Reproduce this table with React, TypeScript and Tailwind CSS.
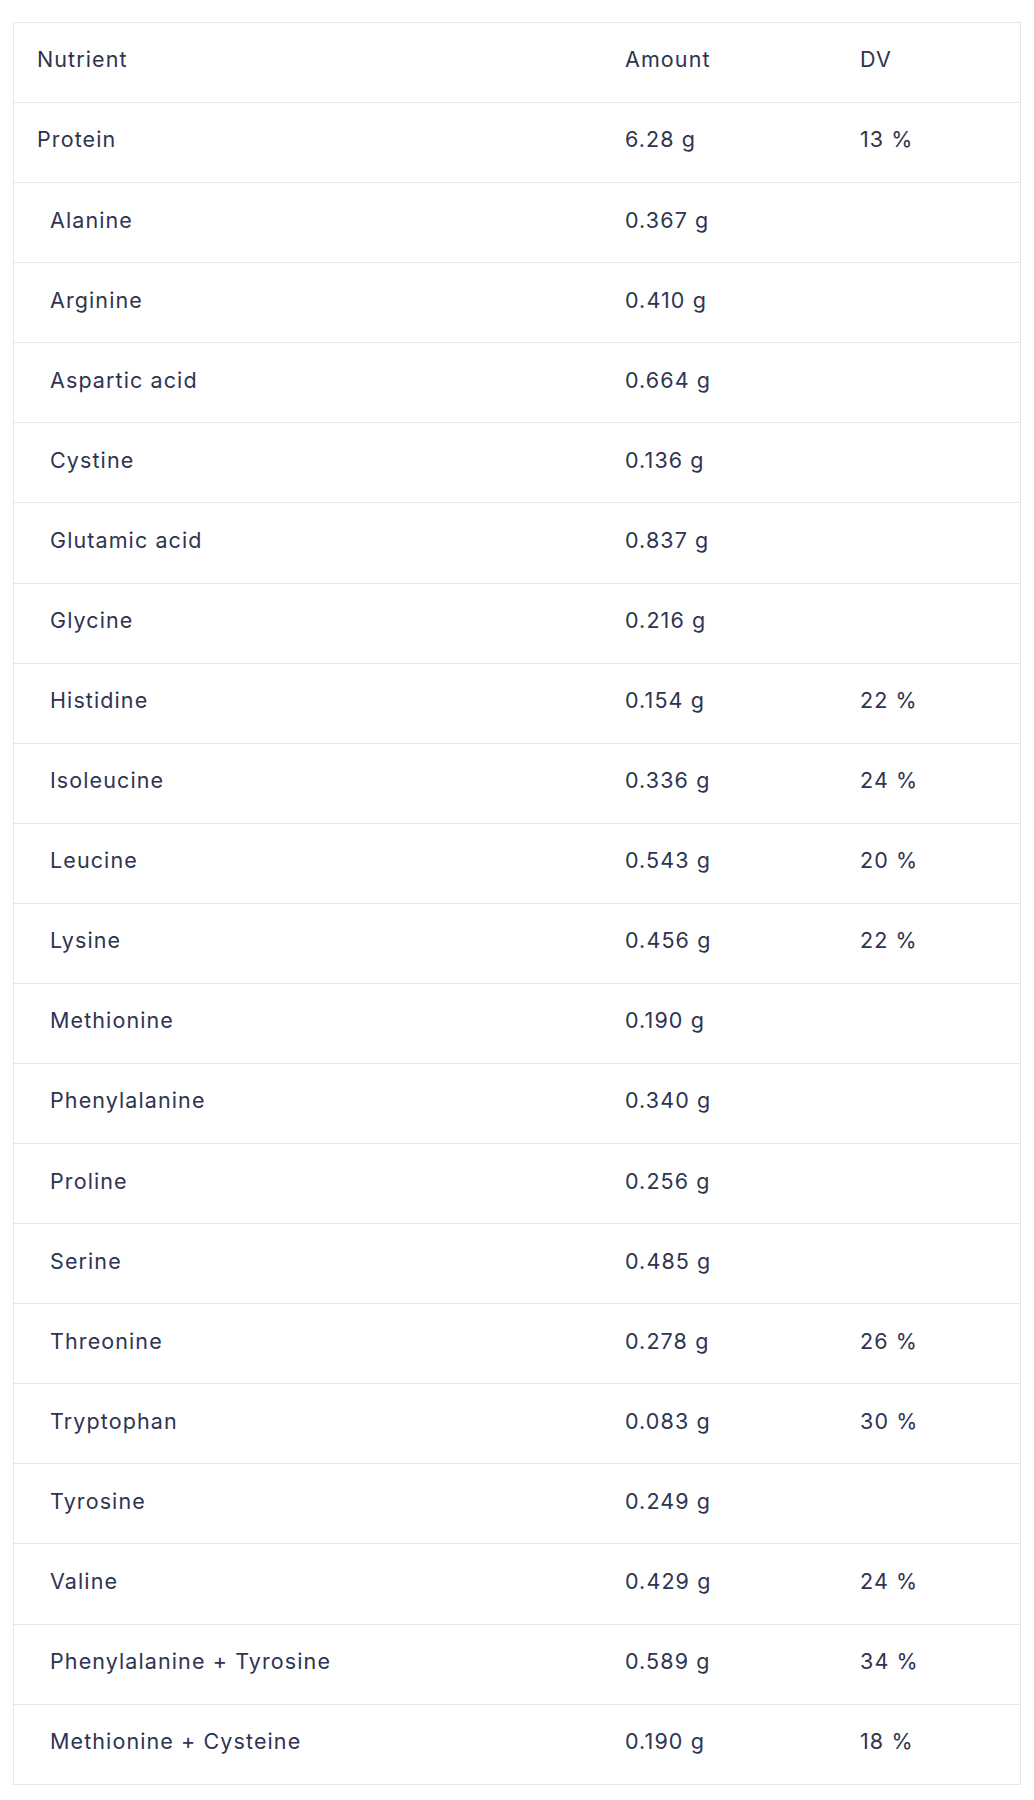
import React from "react";

interface Row {
  name: string;
  amount: string;
  dv?: string;
  sub?: boolean;
}

const rows: Row[] = [
  { name: "Protein", amount: "6.28 g", dv: "13 %" },
  { name: "Alanine", amount: "0.367 g", sub: true },
  { name: "Arginine", amount: "0.410 g", sub: true },
  { name: "Aspartic acid", amount: "0.664 g", sub: true },
  { name: "Cystine", amount: "0.136 g", sub: true },
  { name: "Glutamic acid", amount: "0.837 g", sub: true },
  { name: "Glycine", amount: "0.216 g", sub: true },
  { name: "Histidine", amount: "0.154 g", dv: "22 %", sub: true },
  { name: "Isoleucine", amount: "0.336 g", dv: "24 %", sub: true },
  { name: "Leucine", amount: "0.543 g", dv: "20 %", sub: true },
  { name: "Lysine", amount: "0.456 g", dv: "22 %", sub: true },
  { name: "Methionine", amount: "0.190 g", sub: true },
  { name: "Phenylalanine", amount: "0.340 g", sub: true },
  { name: "Proline", amount: "0.256 g", sub: true },
  { name: "Serine", amount: "0.485 g", sub: true },
  { name: "Threonine", amount: "0.278 g", dv: "26 %", sub: true },
  { name: "Tryptophan", amount: "0.083 g", dv: "30 %", sub: true },
  { name: "Tyrosine", amount: "0.249 g", sub: true },
  { name: "Valine", amount: "0.429 g", dv: "24 %", sub: true },
  { name: "Phenylalanine + Tyrosine", amount: "0.589 g", dv: "34 %", sub: true },
  { name: "Methionine + Cysteine", amount: "0.190 g", dv: "18 %", sub: true },
];

const cols =
  "grid grid-cols-[588px_235px_1fr] h-[80.08px] items-center pb-[6px] border-t border-[#e6e6e6]";

export default function App() {
  return (
    <div className="min-h-screen bg-white px-[13px] pt-[22px] font-['Inter',sans-serif] text-[21.5px] tracking-[1.1px] text-[#2e3451]">
      <div className="border-x border-b border-[#e6e6e6]">
        <div className={cols}>
          <div className="pl-[23px]">Nutrient</div>
          <div className="pl-[23px]">Amount</div>
          <div className="pl-[23px]">DV</div>
        </div>
        {rows.map((r) => (
          <div key={r.name} className={cols}>
            <div className={r.sub ? "pl-[36px]" : "pl-[23px]"}>{r.name}</div>
            <div className="pl-[23px]">{r.amount}</div>
            <div className="pl-[23px]">{r.dv ?? ""}</div>
          </div>
        ))}
      </div>
    </div>
  );
}
